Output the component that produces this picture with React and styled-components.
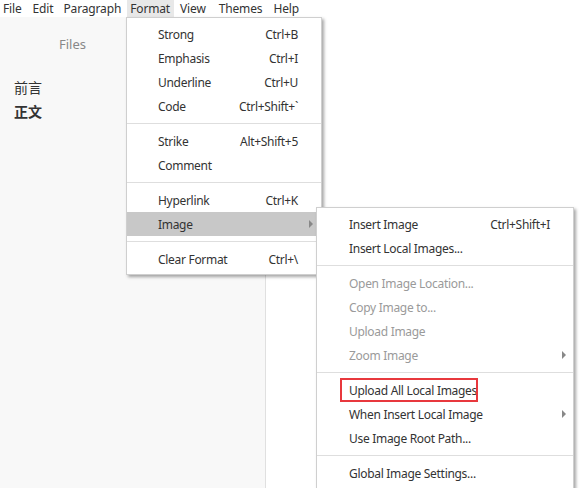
import React from "react";
import styled, { createGlobalStyle } from "styled-components";

const Global = createGlobalStyle`
  html, body { margin: 0; padding: 0; background: #fff; }
  body { font-family: "Noto Sans", "Open Sans", sans-serif; font-size: 12px; color: #333; }
`;

const Window = styled.div`
  position: relative;
  width: 580px;
  height: 488px;
  overflow: hidden;
  display: flex;
  flex-direction: column;
  background: #fff;
`;

const MenuBar = styled.div`
  display: flex;
  height: 17px;
  align-items: stretch;
`;

const BarItem = styled.div`
  display: flex;
  align-items: center;
  padding: 0 4px 0 3px;
  margin-right: ${(p) => p.$gap || 0}px;
  line-height: 17px;
  letter-spacing: -0.15px;
  color: #333;
  background: ${(p) => (p.$active ? "#e8e8e8" : "transparent")};
`;

const Body = styled.div`
  flex: 1;
  display: flex;
`;

const Sidebar = styled.div`
  width: 265px;
  background: #f8f8f8;
  border-right: 1px solid #e0e0e0;
  display: flex;
  flex-direction: column;
`;

const SideHeader = styled.div`
  width: 145px;
  text-align: center;
  color: #888;
  font-size: 13px;
  margin-top: 18px;
  height: 18px;
  line-height: 18px;
`;

const Outline = styled.div`
  padding: 25px 0 0 14px;
  display: flex;
  flex-direction: column;
  gap: 6px;
`;

const OutlineItem = styled.div`
  font-family: "Noto Sans CJK SC", sans-serif;
  font-size: 14px;
  line-height: 18px;
  color: #333;
  font-weight: ${(p) => (p.$bold ? 700 : 400)};
`;

const Editor = styled.div`
  flex: 1;
  background: #fff;
`;

const Menu = styled.div`
  position: absolute;
  left: ${(p) => p.$x}px;
  top: ${(p) => p.$y}px;
  width: ${(p) => p.$w}px;
  background: #fff;
  border: 1px solid #cfcfcf;
  box-shadow: 2px 2px 3px rgba(0, 0, 0, 0.35);
  padding: 4px 0 3px;
  box-sizing: border-box;
`;

const Item = styled.div`
  position: relative;
  display: flex;
  align-items: center;
  height: 24px;
  padding: 0 23px 0 ${(p) => p.$pad}px;
  letter-spacing: -0.3px;
  color: ${(p) => (p.$disabled ? "#9a9a9a" : "#333")};
  background: ${(p) => (p.$hover ? "#c8c8c8" : "transparent")};
  white-space: nowrap;
`;

const Label = styled.span`
  flex: 1;
`;

const Key = styled.span`
  color: #333;
`;

const Arrow = styled.span`
  position: absolute;
  right: ${(p) => p.$r}px;
  top: 8px;
  width: 0;
  height: 0;
  border-top: 4px solid transparent;
  border-bottom: 4px solid transparent;
  border-left: 4px solid #888;
`;

const Sep = styled.div`
  height: 1px;
  background: #dedede;
  margin: 5px 0;
`;

const Highlight = styled.div`
  position: absolute;
  left: 23px;
  top: 0;
  width: 138px;
  height: 24px;
  border: 2px solid #e8383d;
  box-sizing: border-box;
`;

const formatItems = [
  ["Strong", "Ctrl+B"],
  ["Emphasis", "Ctrl+I"],
  ["Underline", "Ctrl+U"],
  ["Code", "Ctrl+Shift+`"],
  "-",
  ["Strike", "Alt+Shift+5"],
  ["Comment", ""],
  "-",
  ["Hyperlink", "Ctrl+K"],
  ["Image", "", { hover: true, arrow: true }],
  "-",
  ["Clear Format", "Ctrl+\\"],
];

const imageItems = [
  ["Insert Image", "Ctrl+Shift+I"],
  ["Insert Local Images...", ""],
  "-",
  ["Open Image Location...", "", { disabled: true }],
  ["Copy Image to...", "", { disabled: true }],
  ["Upload Image", "", { disabled: true }],
  ["Zoom Image", "", { disabled: true, arrow: true }],
  "-",
  ["Upload All Local Images", "", { boxed: true }],
  ["When Insert Local Image", "", { arrow: true }],
  ["Use Image Root Path...", ""],
  "-",
  ["Global Image Settings...", ""],
];

function MenuList({ items, pad, arrowRight }) {
  return items.map((it, i) => {
    if (it === "-") return <Sep key={i} />;
    const [label, key, opts = {}] = it;
    return (
      <Item key={i} $pad={pad} $hover={opts.hover} $disabled={opts.disabled}>
        <Label>{label}</Label>
        {key && <Key>{key}</Key>}
        {opts.arrow && <Arrow $r={arrowRight} />}
        {opts.boxed && <Highlight />}
      </Item>
    );
  });
}

export default function App() {
  return (
    <Window>
      <Global />
      <MenuBar>
        <BarItem $gap={4}>File</BarItem>
        <BarItem $gap={3}>Edit</BarItem>
        <BarItem $gap={2}>Paragraph</BarItem>
        <BarItem $active $gap={3}>Format</BarItem>
        <BarItem $gap={6}>View</BarItem>
        <BarItem $gap={4}>Themes</BarItem>
        <BarItem>Help</BarItem>
      </MenuBar>
      <Body>
        <Sidebar>
          <SideHeader>Files</SideHeader>
          <Outline>
            <OutlineItem>前言</OutlineItem>
            <OutlineItem $bold>正文</OutlineItem>
          </Outline>
        </Sidebar>
        <Editor />
      </Body>
      <Menu $x={126} $y={17} $w={196}>
        <MenuList items={formatItems} pad={31} arrowRight={8} />
      </Menu>
      <Menu $x={316} $y={207} $w={258}>
        <MenuList items={imageItems} pad={32} arrowRight={7} />
      </Menu>
    </Window>
  );
}
